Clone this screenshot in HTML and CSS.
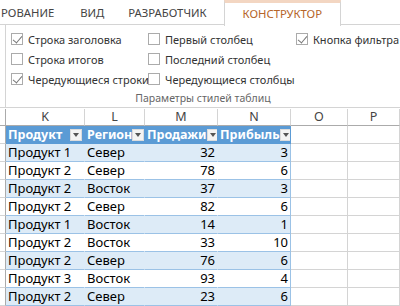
FILE: index.html
```html
<!DOCTYPE html>
<html lang="ru">
<head>
    <meta charset="UTF-8">
    <title>Конструктор таблиц</title>
    <link rel="stylesheet" href="styles.css">
</head>
<body>
    <div class="tabs">
        <div class="tab first">РОВАНИЕ</div>
        <div class="tab">ВИД</div>
        <div class="tab">РАЗРАБОТЧИК</div>
        <div class="tab active">КОНСТРУКТОР</div>
    </div>

    <div class="ribbon">
        <div class="group">
            <div class="options">
                <label class="opt"><span class="box checked"></span>Строка заголовка</label>
                <label class="opt"><span class="box"></span>Первый столбец</label>
                <label class="opt"><span class="box checked"></span>Кнопка фильтра</label>
                <label class="opt"><span class="box"></span>Строка итогов</label>
                <label class="opt"><span class="box"></span>Последний столбец</label>
                <span></span>
                <label class="opt"><span class="box checked"></span>Чередующиеся строки</label>
                <label class="opt"><span class="box"></span>Чередующиеся столбцы</label>
                <span></span>
            </div>
            <div class="group-label">Параметры стилей таблиц</div>
        </div>
    </div>

    <div class="sheet" id="sheet"></div>

    <script>
        const rows = [
            ["Продукт 1", "Север", 32, 3],
            ["Продукт 2", "Север", 78, 6],
            ["Продукт 2", "Восток", 37, 3],
            ["Продукт 2", "Север", 82, 6],
            ["Продукт 1", "Восток", 14, 1],
            ["Продукт 2", "Восток", 33, 10],
            ["Продукт 2", "Север", 76, 6],
            ["Продукт 3", "Восток", 93, 4],
            ["Продукт 2", "Север", 23, 6]
        ];
        const heads = ["Продукт", "Регион", "Продажи", "Прибыль"];
        const sheet = document.getElementById("sheet");

        function cell(cls, text) {
            const c = document.createElement("div");
            c.className = "cell " + cls;
            if (text !== undefined) c.textContent = text;
            sheet.appendChild(c);
            return c;
        }

        cell("colhead rowhead");
        ["K", "L", "M", "N", "O", "P"].forEach(l => cell("colhead", l));

        cell("rowhead");
        heads.forEach(h => {
            const c = cell("th");
            const span = document.createElement("span");
            span.textContent = h;
            const btn = document.createElement("span");
            btn.className = "drop";
            c.appendChild(span);
            c.appendChild(btn);
        });
        cell("grid");
        cell("grid");

        rows.forEach((r, i) => {
            const band = i % 2 === 0 ? " band" : "";
            cell("rowhead");
            cell("td" + band, r[0]);
            cell("td" + band, r[1]);
            cell("td num" + band, r[2]);
            cell("td num last" + band, r[3]);
            cell("grid");
            cell("grid");
        });
    </script>
</body>
</html>
```

FILE: styles.css
```css
* {
    margin: 0;
    padding: 0;
    box-sizing: border-box;
}

body {
    background: #fff;
    width: 400px;
    height: 306px;
    overflow: hidden;
    font-family: 'Noto Sans', sans-serif;
}

.tabs {
    display: flex;
    height: 25px;
    border-bottom: 1px solid #d4d4d4;
    font-size: 11.3px;
    color: #444;
}

.tab {
    padding: 0 12px;
    line-height: 25px;
    white-space: nowrap;
}

.tab.first {
    padding: 0 14px 0 1px;
}

.tab.active {
    margin-left: 5px;
    padding: 0 18px;
    color: #b5652a;
    background: #fff;
    border-left: 1px solid #d4d4d4;
    border-right: 1px solid #d4d4d4;
    border-top: 3px solid #f3d6c2;
    line-height: 22px;
    height: 26px;
}

.ribbon {
    height: 83px;
    border-bottom: 1px solid #d4d4d4;
    padding-left: 5px;
}

.group {
    height: 100%;
    border-left: 1px solid #d4d4d4;
    display: flex;
    flex-direction: column;
}

.options {
    display: grid;
    grid-template-columns: 137px 148px auto;
    grid-auto-rows: 20px;
    padding: 4px 0 0 5px;
    font-size: 11px;
    color: #333;
}

.opt {
    display: flex;
    align-items: center;
    gap: 5px;
    white-space: nowrap;
}

.box {
    width: 12px;
    height: 12px;
    flex-shrink: 0;
    border: 1px solid #ababab;
    background: #fff;
    position: relative;
}

.box.checked::after {
    content: "";
    position: absolute;
    left: 3px;
    top: 0;
    width: 4px;
    height: 8px;
    border-right: 1px solid #777;
    border-bottom: 1px solid #777;
    transform: rotate(40deg);
}

.group-label {
    margin-top: auto;
    padding-bottom: 2px;
    text-align: center;
    font-size: 10.5px;
    color: #666;
}

.sheet {
    margin-top: 1px;
    display: grid;
    grid-template-columns: 6px 79px 60px 73px 73px 57px 52px;
    grid-template-rows: 17px;
    grid-auto-rows: 18px;
    font-size: 13px;
    color: #000;
}

.cell {
    border-right: 1px solid #d4d4d4;
    border-bottom: 1px solid #d4d4d4;
    white-space: nowrap;
    overflow: hidden;
    line-height: 17px;
}

.colhead {
    text-align: center;
    color: #444;
    font-size: 12.5px;
    line-height: 16px;
    border-bottom-color: #ababab;
}

.rowhead {
    background: #fff;
    border-right-color: #ababab;
}

.th {
    background: #5b9bd5;
    color: #fff;
    font-weight: bold;
    font-size: 12.5px;
    display: flex;
    align-items: center;
    justify-content: space-between;
    padding: 0 2px;
    border-right-color: #5b9bd5;
    border-bottom-color: #5b9bd5;
}

.drop {
    width: 12px;
    height: 12px;
    background: #f4f4f4;
    border: 1px solid #dcdcdc;
    position: relative;
    flex-shrink: 0;
}

.drop::after {
    content: "";
    position: absolute;
    left: 2px;
    top: 3px;
    border-left: 3px solid transparent;
    border-right: 3px solid transparent;
    border-top: 4px solid #555;
}

.td {
    padding: 0 2px;
    border-right-color: transparent;
    border-bottom-color: #9bc2e6;
}

.td.band {
    background: #ddebf7;
}

.td.last {
    border-right-color: #9bc2e6;
}

.num {
    text-align: right;
}
```
